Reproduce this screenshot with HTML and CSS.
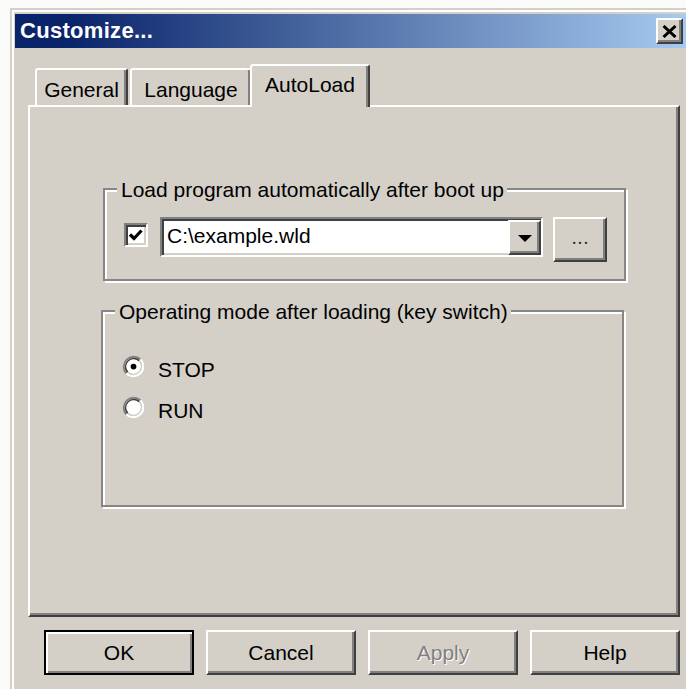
FILE: index.html
```html
<!DOCTYPE html>
<html lang="en">
<head>
<meta charset="utf-8">
<title>Customize...</title>
<link rel="stylesheet" href="styles.css">
</head>
<body>
<div class="window">
  <div class="titlebar">
    <span class="title">Customize...</span>
    <div class="close raised" aria-label="Close">
      <svg width="15" height="13" viewBox="0 0 15 13"><path d="M1.5 1 L13.5 12 M13.5 1 L1.5 12" stroke="#000" stroke-width="3" fill="none"/></svg>
    </div>
  </div>
  <div class="client">
    <div class="tabs">
      <div class="tab tab-general">General</div>
      <div class="tab tab-language">Language</div>
      <div class="tab tab-active">AutoLoad</div>
    </div>
    <div class="panel">
      <div class="group group-load">
        <div class="legend">Load program automatically after boot up</div>
        <div class="row">
          <div class="checkbox">
            <svg width="20" height="20" viewBox="0 0 20 20"><path d="M4 9.5 L8 13.5 L15.5 5.5" stroke="#000" stroke-width="3.2" fill="none"/></svg>
          </div>
          <div class="combo">
            <span class="combo-text">C:\example.wld</span>
            <div class="combo-drop raised"><span class="arrow"></span></div>
          </div>
          <div class="browse raised">...</div>
        </div>
      </div>
      <div class="group group-mode">
        <div class="legend">Operating mode after loading (key switch)</div>
        <div class="radios">
          <div class="radio">
            <svg class="radio-dot" width="23" height="23" viewBox="0 0 24 24">
              <circle cx="12" cy="12" r="11" fill="#fff"/>
              <path d="M4.58 19.42 A10.5 10.5 0 0 1 19.42 4.58" stroke="#808080" stroke-width="2" fill="none"/>
              <path d="M19.42 4.58 A10.5 10.5 0 0 1 4.58 19.42" stroke="#fff" stroke-width="2" fill="none"/>
              <path d="M6 18 A8.5 8.5 0 0 1 18 6" stroke="#404040" stroke-width="2" fill="none"/>
              <path d="M18 6 A8.5 8.5 0 0 1 6 18" stroke="#d4d0c8" stroke-width="2" fill="none"/>
              <circle cx="12" cy="12" r="7.5" fill="#fff"/>
              <circle cx="12" cy="12" r="3" fill="#000"/>
            </svg>
            <span>STOP</span>
          </div>
          <div class="radio">
            <svg class="radio-dot" width="23" height="23" viewBox="0 0 24 24">
              <circle cx="12" cy="12" r="11" fill="#fff"/>
              <path d="M4.58 19.42 A10.5 10.5 0 0 1 19.42 4.58" stroke="#808080" stroke-width="2" fill="none"/>
              <path d="M19.42 4.58 A10.5 10.5 0 0 1 4.58 19.42" stroke="#fff" stroke-width="2" fill="none"/>
              <path d="M6 18 A8.5 8.5 0 0 1 18 6" stroke="#404040" stroke-width="2" fill="none"/>
              <path d="M18 6 A8.5 8.5 0 0 1 6 18" stroke="#d4d0c8" stroke-width="2" fill="none"/>
              <circle cx="12" cy="12" r="7.5" fill="#fff"/>
            </svg>
            <span>RUN</span>
          </div>
        </div>
      </div>
    </div>
    <div class="buttons">
      <div class="btn btn-default">OK</div>
      <div class="btn raised">Cancel</div>
      <div class="btn raised btn-disabled">Apply</div>
      <div class="btn raised">Help</div>
    </div>
  </div>
</div>
</body>
</html>
```

FILE: styles.css
```css
html, body {
  margin: 0;
  overflow: hidden;
}

body {
  width: 686px;
  height: 689px;
  background: #fafaf8;
  font-family: "Liberation Sans", Arial, sans-serif;
  font-size: 21px;
  color: #000;
}

/* classic 3D raised bevel */
.raised {
  box-sizing: border-box;
  background: #d4d0c8;
  border: 2px solid;
  border-color: #fff #404040 #404040 #fff;
  box-shadow: inset -2px -2px 0 #808080;
}

.window {
  margin: 8px 0 0 10px;
  width: 671px;
  height: 679px;
  padding: 4px 0 0 3px;
  border-top: 2px solid #d4d0c8;
  border-left: 2px solid #d4d0c8;
  background: #d4d0c8;
  box-shadow: inset 2px 2px 0 #fff;
}

.titlebar {
  height: 34px;
  display: flex;
  align-items: center;
  padding-left: 5px;
  background: linear-gradient(to right, #0a246a 0%, #0a246a 8%, #a6caf0 100%);
}

.title {
  flex: 1;
  color: #fff;
  font-weight: bold;
  font-size: 22px;
  line-height: 24px;
  letter-spacing: 0.3px;
}

.close {
  width: 27px;
  height: 26px;
  margin-right: 3px;
  display: flex;
  align-items: center;
  justify-content: center;
}

.close svg {
  display: block;
}

.client {
  padding: 16px 0 0 13px;
}

/* tab strip */
.tabs {
  display: flex;
  align-items: flex-end;
  height: 41px;
  padding-left: 7px;
}

.tab {
  box-sizing: border-box;
  height: 37px;
  padding-top: 8px;
  line-height: 24px;
  text-align: center;
  background: #d4d0c8;
  border: 2px solid #fff;
  border-bottom: none;
  border-right-color: #404040;
  border-radius: 3px 3px 0 0;
  box-shadow: inset -2px 0 0 #808080;
}

.tab-general {
  width: 93px;
  margin-right: 2px;
}

.tab-language {
  width: 122px;
}

.tab-active {
  position: relative;
  z-index: 1;
  width: 120px;
  height: 43px;
  padding-top: 7px;
  margin: 0 0 -2px -2px;
}

.panel {
  box-sizing: border-box;
  width: 652px;
  height: 512px;
  padding-top: 81px;
  border: 2px solid #404040;
  border-top-color: #fff;
  border-left-color: #fff;
  box-shadow: inset -2px -2px 0 #808080;
}

/* etched group boxes */
.group {
  box-sizing: border-box;
  width: 523px;
  border: 2px solid #868686;
  box-shadow: inset 2px 2px 0 #fff, 2px 2px 0 #fff;
}

.group-load {
  height: 93px;
  margin-left: 73px;
}

.group-mode {
  height: 197px;
  margin: 29px 0 0 71px;
}

.legend {
  width: fit-content;
  margin: -12px 0 0 12px;
  padding: 0 3px 0 4px;
  line-height: 24px;
  background: #d4d0c8;
}

.row {
  display: flex;
  align-items: flex-start;
  margin: 15px 0 0 19px;
}

.checkbox {
  box-sizing: border-box;
  width: 24px;
  height: 24px;
  margin-top: 6px;
  background: #fff;
  border: 2px solid;
  border-color: #808080 #fff #fff #808080;
  box-shadow: inset 2px 2px 0 #404040, inset -2px -2px 0 #d4d0c8;
}

.checkbox svg {
  display: block;
}

.combo {
  box-sizing: border-box;
  width: 383px;
  height: 40px;
  margin-left: 12px;
  display: flex;
  align-items: flex-start;
  background: #fff;
  border: 2px solid;
  border-color: #808080 #fff #fff #808080;
  box-shadow: inset 2px 2px 0 #404040, inset -2px -2px 0 #d4d0c8;
}

.combo-text {
  flex: 1;
  padding: 5px 0 0 5px;
  line-height: 24px;
}

.combo-drop {
  width: 33px;
  height: 35px;
  margin-top: 1px;
  display: flex;
  align-items: center;
  justify-content: center;
}

.arrow {
  width: 0;
  height: 0;
  margin-top: 2px;
  border-left: 7px solid transparent;
  border-right: 7px solid transparent;
  border-top: 7px solid #000;
}

.browse {
  width: 54px;
  height: 45px;
  margin-left: 10px;
  text-align: center;
  line-height: 36px;
  color: #333;
}

.radios {
  display: flex;
  flex-direction: column;
  gap: 17px;
  margin: 34px 0 0 19px;
}

.radio {
  display: flex;
  align-items: flex-start;
  gap: 13px;
  line-height: 24px;
}

.radio-dot {
  display: block;
  margin-top: -3px;
}

/* dialog buttons */
.buttons {
  display: flex;
  gap: 12px;
  margin: 13px 0 0 16px;
}

.btn {
  box-sizing: border-box;
  width: 150px;
  height: 45px;
  line-height: 41px;
  text-align: center;
}

.btn-default {
  background: #d4d0c8;
  border: 2px solid #000;
  box-shadow: inset 2px 2px 0 #fff, inset -2px -2px 0 #808080;
}

.btn-disabled {
  color: #808080;
  text-shadow: 1px 1px 0 #fff;
}
```
